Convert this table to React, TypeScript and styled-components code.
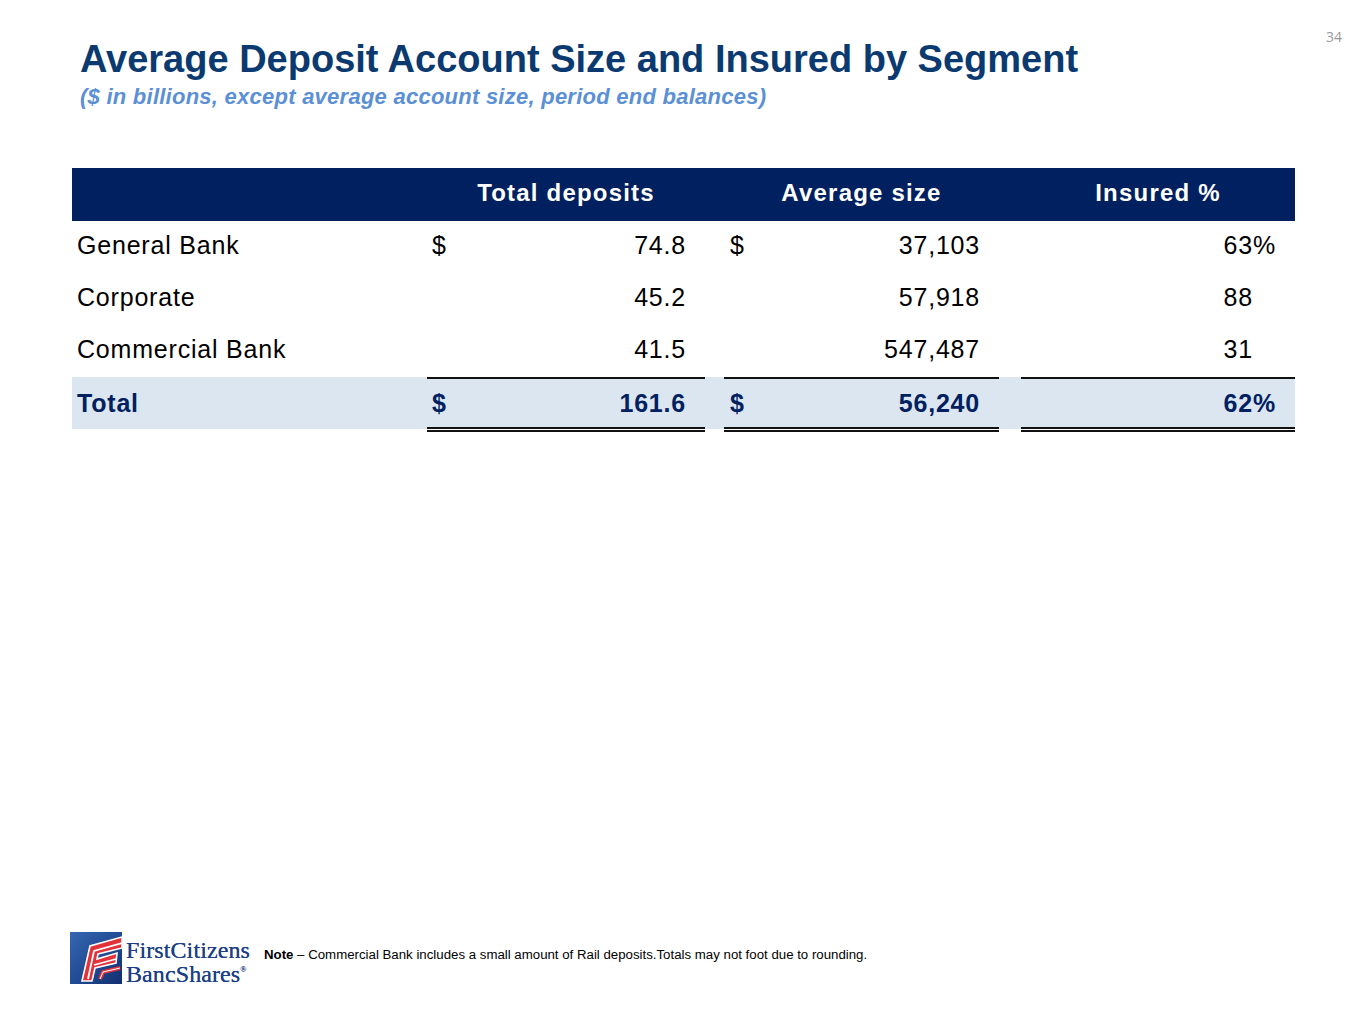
import React from "react";
import styled, { createGlobalStyle } from "styled-components";

const Global = createGlobalStyle`
  html, body { margin: 0; padding: 0; background: #fff; }
  body { font-family: "Liberation Sans", Arial, sans-serif; }
`;

const Page = styled.div`
  position: relative;
  width: 1365px;
  height: 1024px;
  box-sizing: border-box;
  padding: 36px 70px 0 72px;
  display: flex;
  flex-direction: column;
  background: #fff;
`;

const PageNum = styled.div`
  position: absolute;
  top: 27px;
  right: 23px;
  font-family: "Open Sans", sans-serif;
  font-size: 14px;
  color: #9a9a9a;
`;

const Title = styled.h1`
  margin: 0 0 0 8px;
  font-size: 38px;
  line-height: 46px;
  font-weight: 700;
  color: #0b3a70;
  letter-spacing: 0;
`;

const Subtitle = styled.div`
  margin: 2px 0 0 8px;
  font-size: 22px;
  line-height: 26px;
  font-weight: 700;
  font-style: italic;
  color: #5b8fd6;
  letter-spacing: 0.25px;
`;

const Table = styled.div`
  margin-top: 58px;
  display: flex;
  flex-direction: column;
  width: 1223px;
`;

const Row = styled.div<{ $variant?: "head" | "total" }>`
  display: grid;
  grid-template-columns: 355px 278px 19px 275px 22px 274px;
  box-sizing: border-box;
  height: ${(p) => (p.$variant === "head" ? "53px" : "52px")};
  padding-bottom: ${(p) => (p.$variant === "total" ? "0" : "4px")};
  background: ${(p) =>
    p.$variant === "head" ? "#002060" : p.$variant === "total" ? "#dce6f1" : "transparent"};
  color: ${(p) => (p.$variant === "head" ? "#fff" : p.$variant === "total" ? "#002060" : "#000")};
  font-weight: ${(p) => (p.$variant ? 700 : 400)};
  font-size: ${(p) => (p.$variant === "head" ? "24px" : "25px")};
  letter-spacing: ${(p) => (p.$variant === "head" ? "1.2px" : "0.8px")};
`;

const Label = styled.div`
  display: flex;
  align-items: center;
  padding-left: 5px;
`;

const HeadCell = styled.div`
  display: flex;
  align-items: center;
  justify-content: center;
`;

const Spacer = styled.div``;

const ValueCell = styled.div<{ $lined?: boolean; $padL: number }>`
  display: flex;
  align-items: center;
  justify-content: space-between;
  padding: 0 19px 0 ${(p) => p.$padL}px;
  box-sizing: border-box;
  border-top: ${(p) => (p.$lined ? "2px solid #111" : "none")};
  border-bottom: ${(p) => (p.$lined ? "5px double #111" : "none")};
  margin-bottom: ${(p) => (p.$lined ? "-3px" : "0")};
  margin-top: ${(p) => (p.$lined ? "0" : "0")};
`;

const Suffix = styled.span<{ $show: boolean }>`
  display: inline-block;
  width: 23px;
  text-align: left;
  letter-spacing: 0;
  visibility: ${(p) => (p.$show ? "visible" : "hidden")};
`;

const Footer = styled.div`
  margin-top: auto;
  margin-bottom: 40px;
  display: flex;
  align-items: center;
  gap: 14px;
`;

const Logo = styled.div`
  display: flex;
  align-items: center;
  gap: 4px;
  margin-left: -2px;
`;

const LogoText = styled.div`
  font-family: "Liberation Serif", "Times New Roman", serif;
  color: #1d3f85;
  font-size: 24px;
  letter-spacing: 0.1px;
  display: flex;
  flex-direction: column;
  padding-top: 4px;
  text-shadow: 0 0 0.4px #1d3f85;
`;

const LogoLine = styled.div`
  line-height: 20px;
  height: 20px;
  white-space: nowrap;
`;

const Reg = styled.span`
  font-size: 8px;
  vertical-align: 10px;
`;

const Note = styled.div`
  font-size: 13.25px;
  color: #000;
  margin-top: -8px;
  b { font-weight: 700; }
`;

type R = {
  label: string;
  d1: string;
  v1: string;
  d2: string;
  v2: string;
  v3: string;
  pct: boolean;
};

const rows: R[] = [
  { label: "General Bank", d1: "$", v1: "74.8", d2: "$", v2: "37,103", v3: "63", pct: true },
  { label: "Corporate", d1: "", v1: "45.2", d2: "", v2: "57,918", v3: "88", pct: false },
  { label: "Commercial Bank", d1: "", v1: "41.5", d2: "", v2: "547,487", v3: "31", pct: false },
];

const LogoMark = () => (
  <svg width="52" height="52" viewBox="0 0 52 52">
    <defs>
      <linearGradient id="lg" x1="0" y1="0" x2="1" y2="1">
        <stop offset="0" stopColor="#3766b0" />
        <stop offset="0.55" stopColor="#1f4a93" />
        <stop offset="1" stopColor="#142f6e" />
      </linearGradient>
    </defs>
    <rect x="0" y="0" width="52" height="52" fill="url(#lg)" />
    <polygon
      points="12,49 20,14 52,5 52,16 28,22 27,27 47,21 46,31 25,36 22,49"
      fill="#e2323a"
      stroke="#fff"
      strokeWidth="1.6"
      strokeLinejoin="miter"
    />
    <polyline points="18,47 24,19 52,11" fill="none" stroke="#fff" strokeWidth="1.8" />
    <polyline points="24,33 46,27" fill="none" stroke="#fff" strokeWidth="1.8" />
    <polyline points="30,47 33,40 50,36" fill="none" stroke="#e2323a" strokeWidth="4" />
    <polyline points="30,47 33,40 50,36" fill="none" stroke="#fff" strokeWidth="1" />
  </svg>
);

export default function App() {
  return (
    <>
      <Global />
      <Page>
        <PageNum>34</PageNum>
        <Title>Average Deposit Account Size and Insured by Segment</Title>
        <Subtitle>($ in billions, except average account size, period end balances)</Subtitle>
        <Table>
          <Row $variant="head">
            <Spacer />
            <HeadCell>Total deposits</HeadCell>
            <Spacer />
            <HeadCell>Average size</HeadCell>
            <Spacer />
            <HeadCell>Insured %</HeadCell>
          </Row>
          {rows.map((r) => (
            <Row key={r.label}>
              <Label>{r.label}</Label>
              <ValueCell $padL={5}>
                <span>{r.d1}</span>
                <span>{r.v1}</span>
              </ValueCell>
              <Spacer />
              <ValueCell $padL={6}>
                <span>{r.d2}</span>
                <span>{r.v2}</span>
              </ValueCell>
              <Spacer />
              <ValueCell $padL={6}>
                <span />
                <span>
                  {r.v3}
                  <Suffix $show={r.pct}>%</Suffix>
                </span>
              </ValueCell>
            </Row>
          ))}
          <Row $variant="total">
            <Label>Total</Label>
            <ValueCell $lined $padL={5}>
              <span>$</span>
              <span>161.6</span>
            </ValueCell>
            <Spacer />
            <ValueCell $lined $padL={6}>
              <span>$</span>
              <span>56,240</span>
            </ValueCell>
            <Spacer />
            <ValueCell $lined $padL={6}>
              <span />
              <span>62%</span>
            </ValueCell>
          </Row>
        </Table>
        <Footer>
          <Logo>
            <LogoMark />
            <LogoText>
              <LogoLine>FirstCitizens</LogoLine>
              <LogoLine>
                BancShares<Reg>®</Reg>
              </LogoLine>
            </LogoText>
          </Logo>
          <Note>
            <b>Note</b> – Commercial Bank includes a small amount of Rail deposits.Totals may not foot due to rounding.
          </Note>
        </Footer>
      </Page>
    </>
  );
}
